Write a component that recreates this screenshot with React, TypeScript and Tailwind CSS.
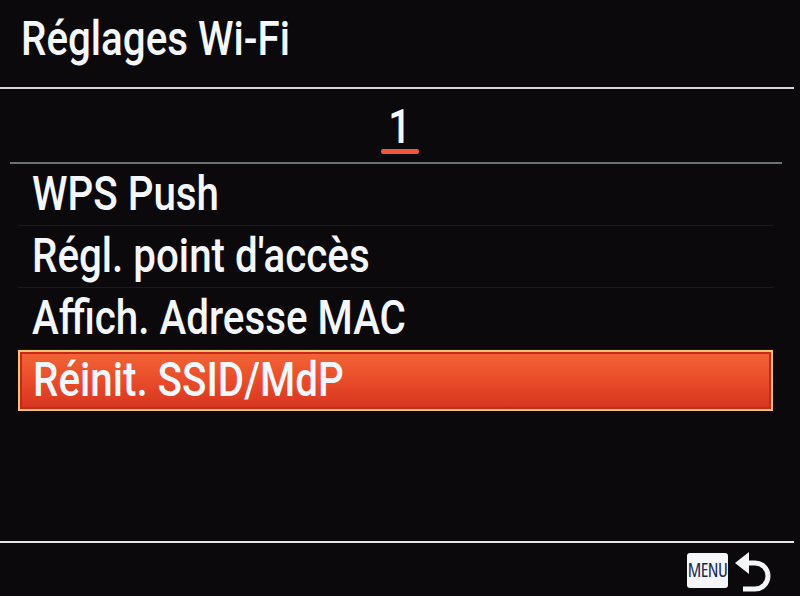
const rows = ["WPS Push", "Régl. point d'accès", "Affich. Adresse MAC"];

function Label({ text }: { text: string }) {
  return <span className="inline-block whitespace-nowrap origin-left scale-x-[0.84]">{text}</span>;
}

function BackArrow() {
  return (
    <svg width="36" height="44" viewBox="0 0 36 44" className="block">
      <polygon points="0,12 14,1 14,23" fill="#f4f6fa" />
      <path d="M12 12 H20 A13 13 0 0 1 20 38 H8" fill="none" stroke="#f4f6fa" strokeWidth="5" />
    </svg>
  );
}

export default function App() {
  return (
    <div className="w-[800px] h-[596px] bg-[#0c090c] text-[#f4f7fc] font-['Roboto',sans-serif] font-medium flex flex-col overflow-hidden">
      <div className="h-[87px] pt-[15px] pl-[21px] text-[48px] leading-[48px]">
        <Label text="Réglages Wi-Fi" />
      </div>
      <div className="h-[2px] w-[794px] bg-[#d6d8dc]" />

      <div className="flex flex-col items-center pt-[16px] pb-[8px]">
        <div className="text-[48px] leading-[44px] scale-x-[0.84]">1</div>
        <div className="h-[5px] w-[38px] rounded-[2px] bg-[#f0583e]" />
      </div>
      <div className="h-[2px] ml-[10px] w-[772px] bg-[#6c7272]" />

      <div className="ml-[18px] w-[755px] flex flex-col">
        {rows.map((r) => (
          <div key={r} className="h-[62px] pl-[14px] pt-[6px] text-[48px] leading-[48px] border-b border-[#1c1a1d]">
            <Label text={r} />
          </div>
        ))}
        <div className="h-[61px] pl-[13px] pt-[4px] text-[48px] leading-[48px] border-2 border-[#f5c575] shadow-[inset_0_0_0_2px_#c9271a] bg-linear-to-b from-[#f26436] via-[#e94c2a] to-[#d6331f]">
          <Label text="Réinit. SSID/MdP" />
        </div>
      </div>

      <div className="flex-1" />
      <div className="h-[2px] w-[794px] bg-[#e4e6ea]" />
      <div className="h-[53px] flex justify-end items-start pt-[8px] pr-[29px] gap-[7px]">
        <div className="mt-[2px] w-[41px] h-[35px] bg-[#f4f6fa] rounded-[3px] flex items-center justify-center text-[#1c2850] text-[19px] leading-none font-['Open_Sans',sans-serif] [font-stretch:75%] font-medium tracking-[-0.5px]">
          MENU
        </div>
        <BackArrow />
      </div>
    </div>
  );
}
